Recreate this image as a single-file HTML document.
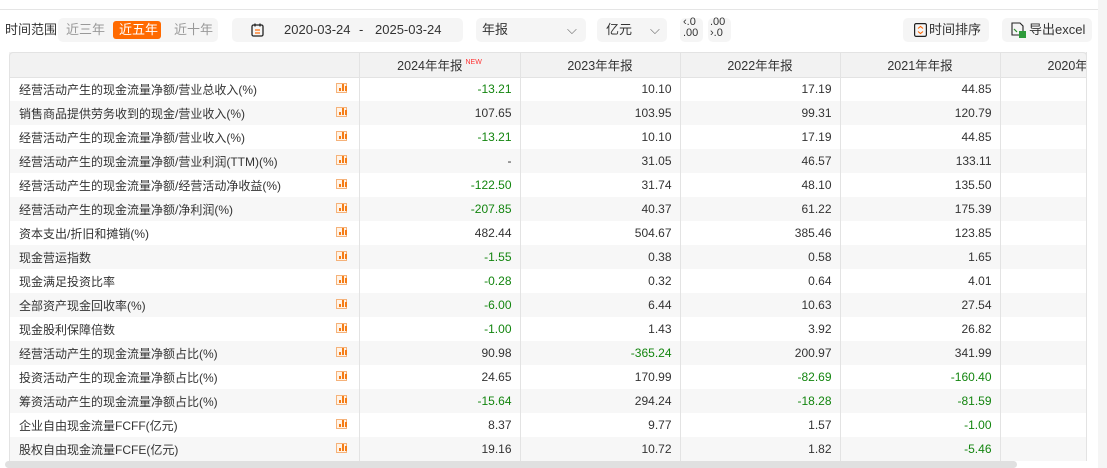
<!DOCTYPE html>
<html><head><meta charset="utf-8"><style>
*{box-sizing:border-box;margin:0;padding:0}
body{width:1107px;height:468px;overflow:hidden;background:#fff;font-family:"Liberation Sans","Noto Sans CJK SC",sans-serif;font-size:12px;color:#333;position:relative}
.topline{position:absolute;left:0;top:9px;width:1098px;height:1px;background:#e5e5e5}
.rstrip{position:absolute;left:1098px;top:0;width:9px;height:468px;background:#f5f5f5}
.abs{position:absolute}
.box{position:absolute;background:#f5f5f5;border-radius:5px;top:18px;height:24px}
.t{position:absolute;top:23px;line-height:14px;font-size:13px}
table{position:absolute;left:9px;top:52px;border-collapse:collapse;table-layout:fixed;width:1077px}
td,th{height:24px;border-right:1px solid #e3e3e3;font-weight:normal;padding:0 8px;white-space:nowrap;overflow:hidden;font-size:12px}
th{background:#f2f2f2;text-align:center;height:25px;border-bottom:1px solid #e3e3e3;font-size:12.5px}
td{text-align:right}
td.l{text-align:left;padding-left:10px;position:relative}
tr:nth-child(even) td{background:#f7f7f7}
.g{color:#13850f}
.ic{position:absolute;right:12px;top:6px;width:11px;height:10px;border:1px solid #f5b27a;background:#fff3e6}
.ic i{position:absolute;bottom:1px;width:2px;background:#f57c16}
.tbl{position:absolute;left:9px;top:52px;width:1078px;height:409px;border:1px solid #e3e3e3;border-bottom:none;border-radius:4px 4px 0 0;pointer-events:none}
.sb{position:absolute;left:5px;top:461px;width:1012px;height:7px;background:#e0e0e0;border-radius:4px}
</style></head><body>
<div class="topline"></div><div class="rstrip"></div>
<div class="t" style="left:5px">时间范围</div>
<div class="box" style="left:58px;width:160px"></div>
<div class="t" style="left:66px;color:#999">近三年</div>
<div class="abs" style="left:113px;top:21px;width:48px;height:18px;background:#ff6a00;border-radius:3px"></div>
<div class="t" style="left:119px;color:#fff">近五年</div>
<div class="t" style="left:174px;color:#999">近十年</div>
<div class="box" style="left:232px;width:231px"></div>
<svg class="abs" style="left:251px;top:23px" width="13" height="14" viewBox="0 0 13 14"><rect x="1" y="2" width="11" height="11" rx="1.5" fill="none" stroke="#222" stroke-width="1.3"/><line x1="4" y1="0.5" x2="4" y2="3.5" stroke="#222" stroke-width="1.3"/><line x1="9" y1="0.5" x2="9" y2="3.5" stroke="#222" stroke-width="1.3"/><line x1="4" y1="7" x2="9" y2="7" stroke="#f60" stroke-width="1.2"/><line x1="4" y1="10" x2="9" y2="10" stroke="#f60" stroke-width="1.2"/></svg>
<div class="t" style="left:284px">2020-03-24</div>
<div class="t" style="left:359px">-</div>
<div class="t" style="left:375px">2025-03-24</div>
<div class="box" style="left:476px;width:110px"></div>
<div class="t" style="left:482px">年报</div>
<div class="t" style="left:567px;color:#666">⌵</div>
<div class="box" style="left:597px;width:70px"></div>
<div class="t" style="left:606px">亿元</div>
<div class="t" style="left:650px;color:#666">⌵</div>
<div class="box" style="left:680px;width:23px"></div>
<div class="abs" style="left:683px;top:17px;font-size:11px;line-height:11px">‹.0<br>.00</div>
<div class="box" style="left:708px;width:23px"></div>
<div class="abs" style="left:710px;top:17px;font-size:11px;line-height:11px">.00<br>›.0</div>
<div class="box" style="left:903px;width:86px"></div>
<svg class="abs" style="left:914px;top:23px" width="13" height="14"><rect x="0.6" y="0.6" width="11.8" height="12.8" rx="1.5" fill="none" stroke="#222" stroke-width="1.2"/><path d="M4 5.5L6.5 3.5L9 5.5M4 8.5L6.5 10.5L9 8.5" fill="none" stroke="#f60" stroke-width="1.1"/></svg>
<div class="t" style="left:929px">时间排序</div>
<div class="box" style="left:1002px;width:90px"></div>
<svg class="abs" style="left:1011px;top:22px" width="16" height="16"><path d="M1 1h8l3 3v9H1z" fill="none" stroke="#222" stroke-width="1.1"/><path d="M3 7l3 3" stroke="#2a8a2a" stroke-width="1.2"/><rect x="8" y="9" width="7" height="7" fill="#2e9b3a"/></svg>
<div class="t" style="left:1029px">导出excel</div>

<table>
<colgroup><col style="width:350px"><col style="width:161px"><col style="width:160px"><col style="width:160px"><col style="width:160px"><col style="width:86px"></colgroup>
<tr><th></th><th>2024年年报<sup style="color:#f33;font-size:7px;vertical-align:6px;margin-left:3px">NEW</sup></th><th>2023年年报</th><th>2022年年报</th><th>2021年年报</th><th style="text-align:left;padding-left:47px">2020年</th></tr>
</table>
<table style="top:77px">
<colgroup><col style="width:350px"><col style="width:161px"><col style="width:160px"><col style="width:160px"><col style="width:160px"><col style="width:86px"></colgroup>
<tbody id="b"></tbody></table>
<script>
var R=[["经营活动产生的现金流量净额/营业总收入(%)","g-13.21","10.10","17.19","44.85"],
["销售商品提供劳务收到的现金/营业收入(%)","107.65","103.95","99.31","120.79"],
["经营活动产生的现金流量净额/营业收入(%)","g-13.21","10.10","17.19","44.85"],
["经营活动产生的现金流量净额/营业利润(TTM)(%)","-","31.05","46.57","133.11"],
["经营活动产生的现金流量净额/经营活动净收益(%)","g-122.50","31.74","48.10","135.50"],
["经营活动产生的现金流量净额/净利润(%)","g-207.85","40.37","61.22","175.39"],
["资本支出/折旧和摊销(%)","482.44","504.67","385.46","123.85"],
["现金营运指数","g-1.55","0.38","0.58","1.65"],
["现金满足投资比率","g-0.28","0.32","0.64","4.01"],
["全部资产现金回收率(%)","g-6.00","6.44","10.63","27.54"],
["现金股利保障倍数","g-1.00","1.43","3.92","26.82"],
["经营活动产生的现金流量净额占比(%)","90.98","g-365.24","200.97","341.99"],
["投资活动产生的现金流量净额占比(%)","24.65","170.99","g-82.69","g-160.40"],
["筹资活动产生的现金流量净额占比(%)","g-15.64","294.24","g-18.28","g-81.59"],
["企业自由现金流量FCFF(亿元)","8.37","9.77","1.57","g-1.00"],
["股权自由现金流量FCFE(亿元)","19.16","10.72","1.82","g-5.46"]];
var h="";R.forEach(function(r){h+='<tr><td class="l">'+r[0]+'<span class="ic"><i style="left:2px;height:3px"></i><i style="left:5px;height:7px"></i><i style="left:8px;height:5px"></i></span></td>';
for(var i=1;i<5;i++){var v=r[i];h+=v[0]=="g"?'<td class="g">'+v.slice(1)+'</td>':'<td>'+v+'</td>';}h+='<td></td></tr>';});
document.getElementById("b").innerHTML=h;
</script>
<div class="tbl"></div>
<div class="sb"></div>
</body></html>
